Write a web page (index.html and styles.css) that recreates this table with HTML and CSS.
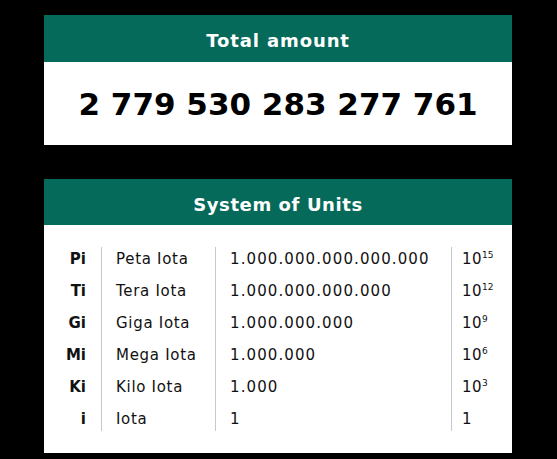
FILE: index.html
```html
<!DOCTYPE html>
<html>
<head>
<meta charset="utf-8">
<link rel="stylesheet" href="styles.css">
</head>
<body>
<main class="page">
  <section class="card card-total">
    <header class="card-head">Total amount</header>
    <div class="total-body">2 779 530 283 277 761</div>
  </section>
  <section class="card card-units">
    <header class="card-head card-head-units">System of Units</header>
    <div class="units-body">
      <div class="col col-abbr">
        <span>Pi</span><span>Ti</span><span>Gi</span><span>Mi</span><span>Ki</span><span>i</span>
      </div>
      <div class="col col-name">
        <span>Peta Iota</span><span>Tera Iota</span><span>Giga Iota</span><span>Mega Iota</span><span>Kilo Iota</span><span>Iota</span>
      </div>
      <div class="col col-value">
        <span>1.000.000.000.000.000</span><span>1.000.000.000.000</span><span>1.000.000.000</span><span>1.000.000</span><span>1.000</span><span>1</span>
      </div>
      <div class="col col-pow">
        <span>10<sup>15</sup></span><span>10<sup>12</sup></span><span>10<sup>9</sup></span><span>10<sup>6</sup></span><span>10<sup>3</sup></span><span>1</span>
      </div>
    </div>
  </section>
</main>
</body>
</html>
```
FILE: styles.css
```css
html, body {
  margin: 0;
  padding: 0;
  background: #000;
}
body {
  font-family: "DejaVu Sans", "Open Sans", sans-serif;
  color: #111;
}
.page {
  width: 468px;
  margin-left: 44px;
  padding-top: 15px;
  display: flex;
  flex-direction: column;
  gap: 34px;
}
.card {
  background: #fff;
}
.card-head {
  background: #066a5b;
  color: #fff;
  font-weight: bold;
  font-size: 18px;
  height: 47px;
  box-sizing: border-box;
  padding-top: 4px;
  display: flex;
  align-items: center;
  justify-content: center;
  letter-spacing: 0.9px;
}
.card-head-units {
  height: 46px;
  letter-spacing: 0.6px;
}
.total-body {
  height: 83px;
  display: flex;
  align-items: center;
  justify-content: center;
  font-weight: bold;
  font-size: 31px;
  color: #000;
}
.units-body {
  display: flex;
  padding: 22px 0 22px;
  font-size: 15px;
}
.col {
  display: flex;
  flex-direction: column;
  gap: 8px;
  line-height: 24px;
  box-sizing: border-box;
}
.col span {
  height: 24px;
  white-space: nowrap;
}
.col-abbr {
  width: 57px;
  text-align: right;
  padding-right: 15px;
  font-weight: bold;
}
.col-name {
  width: 114px;
  padding-left: 14px;
  border-left: 1px solid #c8c8c8;
  letter-spacing: 0.7px;
}
.col-value {
  width: 236px;
  padding-left: 14px;
  border-left: 1px solid #c8c8c8;
  letter-spacing: 1.1px;
}
.col-pow {
  width: 61px;
  padding-left: 10px;
  border-left: 1px solid #c8c8c8;
  letter-spacing: 0.5px;
}
.col-pow sup {
  font-size: 9px;
  vertical-align: 6px;
  line-height: 0;
  letter-spacing: 0;
}
```
